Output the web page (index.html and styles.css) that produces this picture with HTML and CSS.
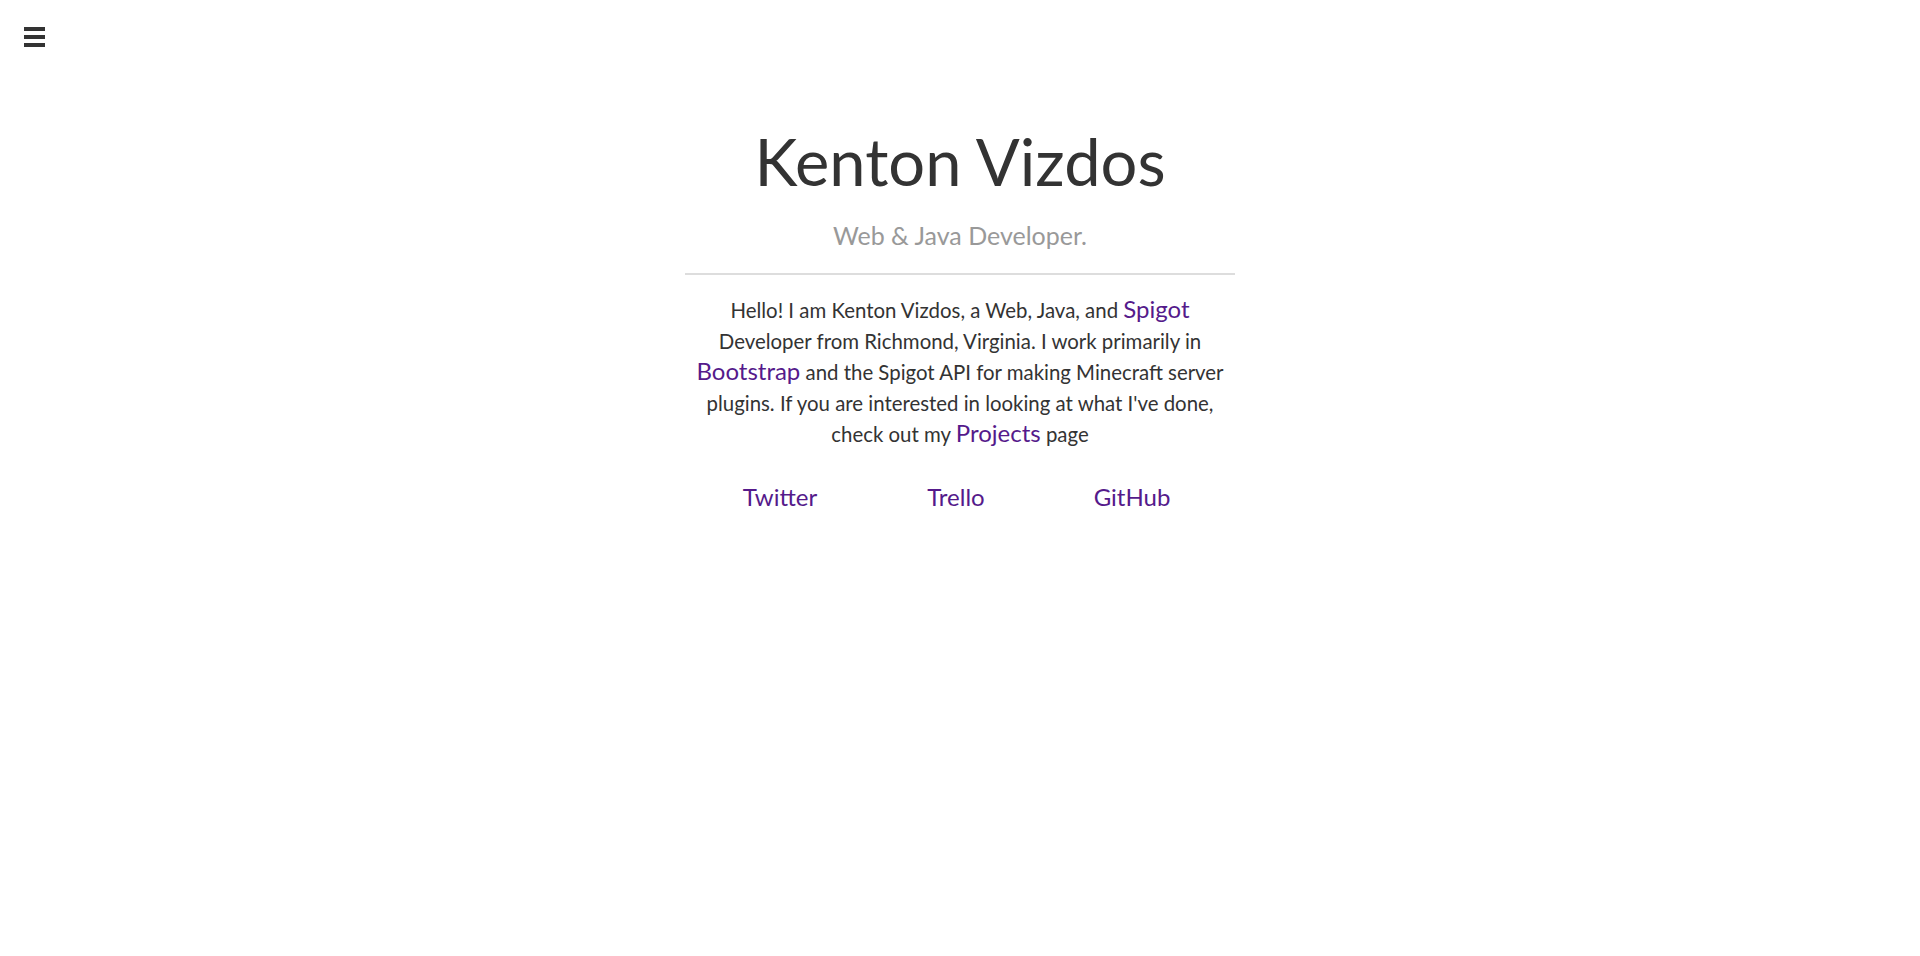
FILE: index.html
```html
<!DOCTYPE html>
<html lang="en">
<head>
<meta charset="utf-8">
<title>Kenton Vizdos</title>
<link rel="stylesheet" href="styles.css">
</head>
<body>
<button class="menu-toggle" aria-label="Menu"><span></span><span></span><span></span></button>
<main class="container">
  <h1 class="title">Kenton Vizdos</h1>
  <p class="subtitle">Web &amp; Java Developer.</p>
  <hr class="divider">
  <p class="intro">Hello! I am Kenton Vizdos, a Web, Java, and <a href="#">Spigot</a> Developer from Richmond, Virginia. I work primarily in <a href="#">Bootstrap</a> and the Spigot API for making Minecraft server plugins. If you are interested in looking at what I've done, check out my <a href="#">Projects</a> page</p>
  <nav class="social">
    <a href="#">Twitter</a>
    <a href="#">Trello</a>
    <a href="#">GitHub</a>
  </nav>
</main>
</body>
</html>
```
FILE: styles.css
```css
html, body {
  margin: 0;
  padding: 0;
  background: #fff;
}
body {
  font-family: Lato, "Noto Sans", sans-serif;
  color: #333;
}
.menu-toggle {
  position: fixed;
  top: 27px;
  left: 24px;
  width: 21px;
  padding: 0;
  border: 0;
  background: transparent;
  display: flex;
  flex-direction: column;
  gap: 4px;
  cursor: pointer;
}
.menu-toggle span {
  display: block;
  height: 4px;
  background: #333;
}
.container {
  width: 550px;
  margin: 0 auto;
  padding-top: 121px;
  text-align: center;
}
.title {
  margin: 0;
  font-size: 65px;
  font-weight: 400;
  line-height: 80px;
  color: #333;
}
.subtitle {
  margin: 17px 0 0;
  font-size: 25px;
  line-height: 34px;
  color: #999;
}
.divider {
  margin: 21px 0 0;
  border: 0;
  height: 2px;
  background: #ddd;
}
.intro {
  margin: 20px 11px 0;
  font-size: 20.4px;
  line-height: 31px;
  color: #333;
}
.intro a {
  line-height: 1;
}
.intro a, .social a {
  color: #551a8b;
  text-decoration: none;
  font-size: 24px;
}
.social {
  display: grid;
  grid-template-columns: repeat(3, 1fr);
  margin: 30px 15px 0 7px;
  line-height: 34px;
}
```
